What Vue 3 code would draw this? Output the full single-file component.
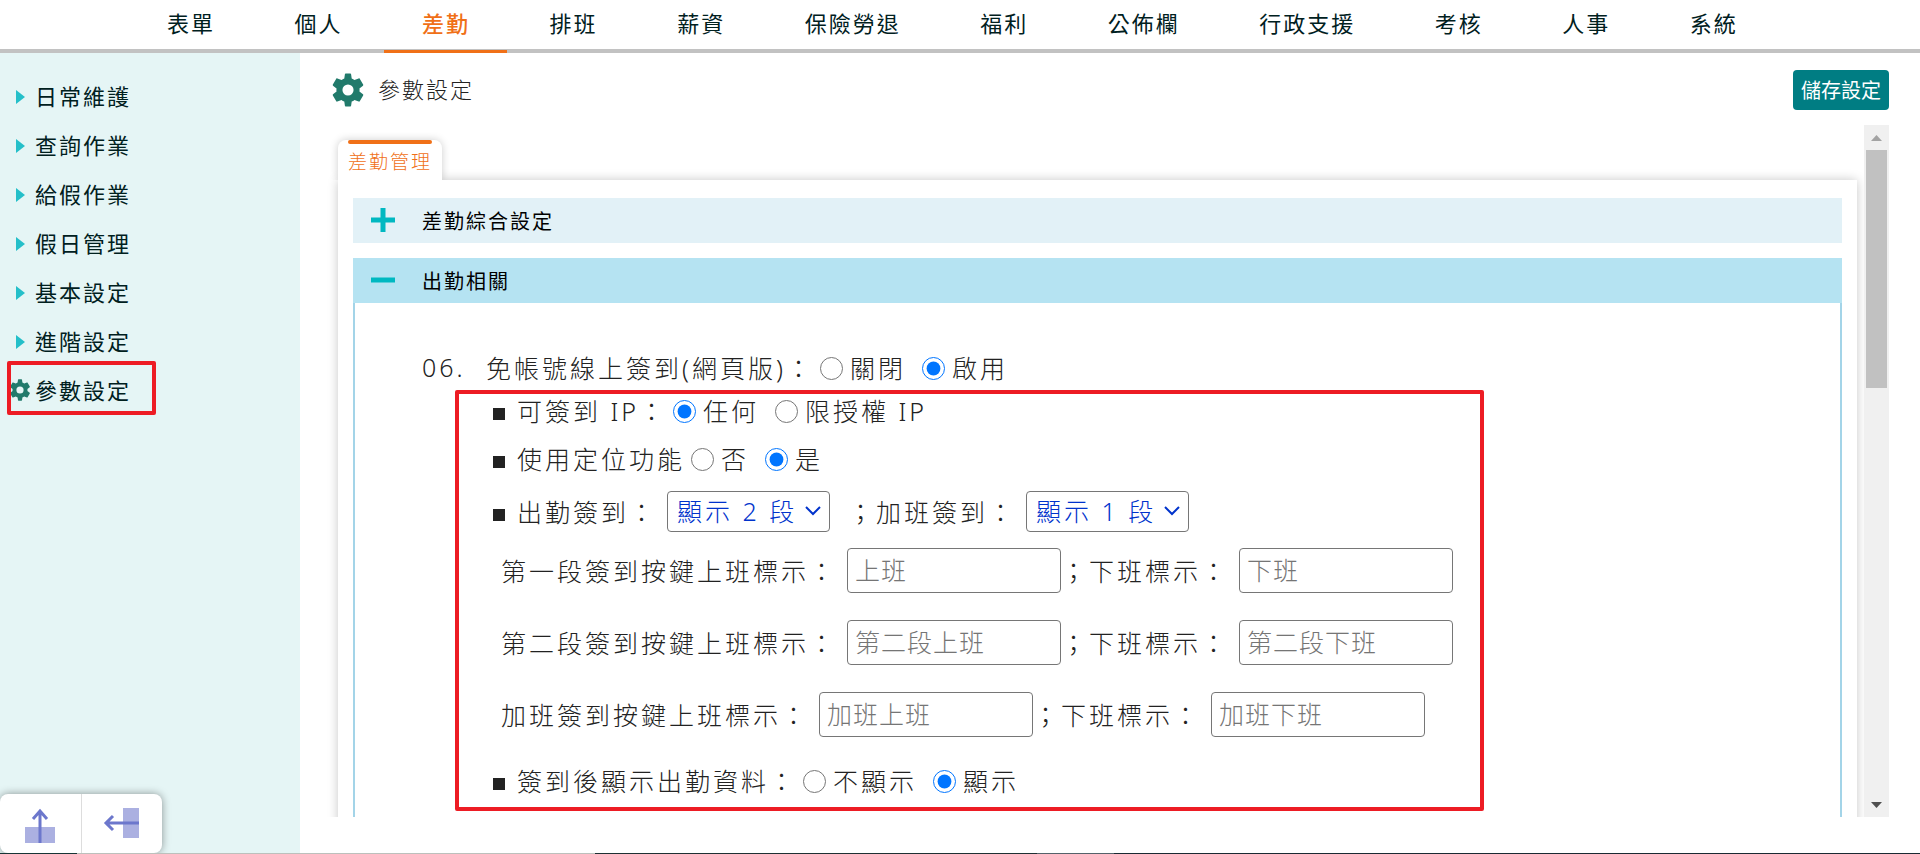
<script setup>
import { ref } from 'vue'

const menus = ['表單', '個人', '差勤', '排班', '薪資', '保險勞退', '福利', '公佈欄', '行政支援', '考核', '人事', '系統']
const sideItems = ['日常維護', '查詢作業', '給假作業', '假日管理', '基本設定', '進階設定']

const online = ref('on')
const ip = ref('any')
const locate = ref('yes')
const showData = ref('show')
const dutySegments = ref('2')
const overtimeSegments = ref('1')

const labels = [
  { id: 'first', text: '第一段簽到按鍵上班標示：', on: '上班', off: '下班' },
  { id: 'second', text: '第二段簽到按鍵上班標示：', on: '第二段上班', off: '第二段下班' },
  { id: 'overtime', text: '加班簽到按鍵上班標示：', on: '加班上班', off: '加班下班' },
]
const gear =
  'M19.4 13c0-.3.1-.6.1-1s0-.7-.1-1l2.3-1.800c.2-.2.3-.5.1-.7l-2.200-3.800c-.1-.2-.4-.3-.7-.2l-2.700 1.100c-.6-.4-1.100-.8-1.800-1L14 1.800c0-.3-.2-.5-.5-.5h-3c-.3 0-.5.2-.5.5l-.4 2.800c-.7.2-1.200.6-1.800 1L5.100 4.500c-.3-.1-.6 0-.7.2L2.200 8.500c-.2.2-.1.5.1.7L4.600 11c0 .3-.1.6-.1 1s0 .7.1 1l-2.300 1.800c-.2.2-.3.5-.1.7l2.200 3.800c.1.2.4.3.7.2l2.700-1.100c.6.4 1.100.8 1.800 1l.4 2.800c0 .3.200.5.5.5h3c.3 0 .5-.2.5-.5l.4-2.800c.7-.2 1.200-.6 1.800-1l2.700 1.100c.3.1.6 0 .7-.2l2.200-3.800c.2-.2.1-.5-.1-.7L19.400 13zM12 15.600a3.600 3.600 0 1 1 0-7.200 3.600 3.600 0 0 1 0 7.200z'
</script>

<template>
  <div class="page" lang="zh-Hant">
    <header class="topbar">
      <nav class="menu">
        <a v-for="m in menus" :key="m" href="#" :class="{ active: m === '差勤' }">{{ m }}</a>
      </nav>
    </header>

    <div class="body">
      <aside class="sidebar">
        <nav class="side-nav">
          <a v-for="s in sideItems" :key="s" href="#"><span class="caret"></span>{{ s }}</a>
          <a href="#" class="current">
            <svg class="side-gear" viewBox="1 1 22 22"><path :d="gear" fill="#217a6b" /></svg>參數設定
          </a>
        </nav>
        <div class="dock">
          <button type="button" aria-label="收合上方">
            <svg width="40" height="40" viewBox="0 0 40 40">
              <rect x="5" y="21" width="30" height="16" fill="#abb0e1" />
              <path d="M20 37V5M13 13l7-8 7 8" fill="none" stroke="#6c77cc" stroke-width="3" />
            </svg>
          </button>
          <button type="button" aria-label="收合左側">
            <svg width="40" height="40" viewBox="0 0 40 40">
              <rect x="21" y="2" width="16" height="30" fill="#abb0e1" />
              <path d="M37 17H4M11 10l-7 7 7 7" fill="none" stroke="#6c77cc" stroke-width="3" />
            </svg>
          </button>
        </div>
      </aside>

      <main class="main">
        <div class="title-row">
          <svg class="title-gear" viewBox="1 1 22 22"><path :d="gear" fill="#217a6b" /></svg>
          <h1>參數設定</h1>
          <button type="button" class="save">儲存設定</button>
        </div>

        <div class="scroller">
          <div class="content">
            <button type="button" class="tab">差勤管理</button>
            <div class="card">
              <button type="button" class="acc">
                <svg width="24" height="24" viewBox="0 0 24 24"><path d="M0 12h24M12 0v24" stroke="#00b8c1" stroke-width="5" /></svg>
                差勤綜合設定
              </button>
              <button type="button" class="acc open">
                <svg width="24" height="24" viewBox="0 0 24 24"><path d="M0 12h24" stroke="#00b8c1" stroke-width="5" /></svg>
                出勤相關
              </button>
              <section class="panel">
                <div class="row head">
                  <span class="num">06.</span>
                  <span>免帳號線上簽到(網頁版)：</span>
                  <label><input v-model="online" type="radio" name="online" value="off" />關閉</label>
                  <label><input v-model="online" type="radio" name="online" value="on" />啟用</label>
                </div>
                <div class="sub">
                  <div class="row ip">
                    <i class="dot"></i><span>可簽到 IP：</span>
                    <label><input v-model="ip" type="radio" name="ip" value="any" />任何</label>
                    <label><input v-model="ip" type="radio" name="ip" value="auth" />限授權 IP</label>
                  </div>
                  <div class="row locate">
                    <i class="dot"></i><span>使用定位功能</span>
                    <label><input v-model="locate" type="radio" name="locate" value="no" />否</label>
                    <label><input v-model="locate" type="radio" name="locate" value="yes" />是</label>
                  </div>
                  <div class="row seg">
                    <i class="dot"></i><label for="duty">出勤簽到：</label>
                    <span class="select">
                      <select id="duty" v-model="dutySegments">
                        <option value="1">顯示 1 段</option>
                        <option value="2">顯示 2 段</option>
                      </select>
                      <svg width="16" height="10" viewBox="0 0 16 10"><path d="M1 1l7 7 7-7" fill="none" stroke="#0033cc" stroke-width="2" /></svg>
                    </span>
                    <label for="ot" class="after">；加班簽到：</label>
                    <span class="select">
                      <select id="ot" v-model="overtimeSegments">
                        <option value="1">顯示 1 段</option>
                        <option value="2">顯示 2 段</option>
                      </select>
                      <svg width="16" height="10" viewBox="0 0 16 10"><path d="M1 1l7 7 7-7" fill="none" stroke="#0033cc" stroke-width="2" /></svg>
                    </span>
                  </div>
                  <div v-for="l in labels" :key="l.id" class="row field">
                    <label :for="l.id + '-on'">{{ l.text }}</label>
                    <input :id="l.id + '-on'" type="text" :placeholder="l.on" />
                    <label :for="l.id + '-off'">；下班標示：</label>
                    <input :id="l.id + '-off'" type="text" :placeholder="l.off" />
                  </div>
                  <div class="row last">
                    <i class="dot"></i><span>簽到後顯示出勤資料：</span>
                    <label><input v-model="showData" type="radio" name="show" value="hide" />不顯示</label>
                    <label><input v-model="showData" type="radio" name="show" value="show" />顯示</label>
                  </div>
                </div>
              </section>
            </div>
          </div>
          <div class="scrollbar">
            <svg width="11" height="6" viewBox="0 0 11 6"><path d="M0 6L5.500 0 11 6z" fill="#a3a3a3" /></svg>
            <div class="thumb"></div>
            <svg width="11" height="6" viewBox="0 0 11 6"><path d="M0 0h11L5.500 6z" fill="#505050" /></svg>
          </div>
        </div>
      </main>
    </div>
    <div class="strip"></div>
  </div>
</template>

<style>
body {
  overflow: hidden;
}
</style>

<style scoped>
* {
  box-sizing: border-box;
}
.page {
  height: 100vh;
  display: flex;
  flex-direction: column;
  background: #fff;
  color: #222;
  font-family: "Open Sans", "Noto Sans CJK TC", sans-serif;
}
button {
  border: 0;
  background: none;
  font-family: inherit;
  cursor: pointer;
}
a {
  text-decoration: none;
  color: #00201e;
}
.topbar {
  flex: none;
  height: 53px;
  border-bottom: 4px solid #c2c2c2;
}
.menu {
  display: flex;
  justify-content: space-between;
  padding: 0 145px 0 129px;
}
.menu a {
  height: 53px;
  padding: 0 37px 0 38px;
  font-size: 22px;
  line-height: 46px;
  letter-spacing: 2px;
  white-space: nowrap;
}
.menu a.active {
  color: #f07017;
  font-weight: 500;
  border-bottom: 3px solid #f07017;
}
.body {
  flex: 1;
  min-height: 0;
  display: flex;
}
.sidebar {
  flex: none;
  width: 300px;
  display: flex;
  flex-direction: column;
  justify-content: space-between;
  overflow: hidden;
  background: #e5f5f5;
}
.side-nav {
  padding: 19px 0 0 7px;
}
.side-nav a {
  position: relative;
  display: flex;
  align-items: center;
  height: 49px;
  padding: 0 0 4px 28px;
  font-size: 22px;
  letter-spacing: 2px;
}
.caret {
  position: absolute;
  top: 18px;
  left: 9px;
  border: 7px solid transparent;
  border-left: 9px solid #24bfc9;
  border-right: 0;
}
.side-nav a.current {
  width: 149px;
}
.side-nav a.current::after {
  content: "";
  position: absolute;
  inset: -5px 0 0;
  border: 4px solid #ed1c24;
  border-radius: 2px;
}
.side-gear {
  position: absolute;
  top: 13px;
  left: 2px;
  width: 22px;
  height: 22px;
}
.dock {
  width: 162px;
  height: 59px;
  display: flex;
  border-radius: 8px;
  background: #fff;
  box-shadow: 0 0 8px rgba(0, 0, 0, 0.4);
}
.dock button {
  flex: 1;
  padding: 8px 0 0;
}
.dock button + button {
  border-left: 1px solid #ddd;
}
.main {
  flex: 1;
  min-width: 0;
  display: flex;
  flex-direction: column;
  padding: 17px 31px 36px 0;
}
.title-row {
  flex: none;
  display: flex;
  align-items: center;
  height: 40px;
  padding-left: 31px;
}
.title-gear {
  width: 34px;
  height: 34px;
}
h1 {
  flex: 1;
  margin: 0;
  padding: 0 0 4px 13px;
  font-size: 22px;
  font-weight: 300;
  letter-spacing: 2px;
}
.save {
  height: 40px;
  padding: 0 8px 2px;
  border-radius: 4px;
  background: #007d83;
  color: #fff;
  font-size: 20px;
}
.scroller {
  flex: 1;
  min-height: 0;
  display: flex;
  margin-top: 15px;
}
.content {
  flex: 1;
  min-width: 0;
  overflow: hidden;
  padding: 15px 7px 0 38px;
}
.tab {
  position: relative;
  z-index: 1;
  display: block;
  height: 40px;
  padding: 0 10px;
  border-radius: 8px 8px 0 0;
  background: #fff;
  box-shadow: 0 0 8px rgba(0, 0, 0, 0.2);
  clip-path: inset(-10px -10px 0 -10px);
  color: #f07017;
  font-size: 19px;
  font-weight: 300;
  line-height: 44px;
  letter-spacing: 2px;
}
.tab::before {
  content: "";
  position: absolute;
  top: 0;
  left: 10px;
  right: 10px;
  height: 4px;
  border-radius: 2px;
  background: #f07017;
}
.card {
  padding: 18px 15px;
  background: #fff;
  box-shadow: 0 0 10px rgba(0, 0, 0, 0.22);
}
.acc {
  display: flex;
  align-items: center;
  gap: 27px;
  width: 100%;
  height: 45px;
  margin-bottom: 15px;
  padding: 0 18px 1px;
  background: #e2f1f7;
  color: #000;
  font-size: 20px;
  letter-spacing: 2px;
}
.acc.open {
  margin-bottom: 0;
  background: #b5e3f2;
}
.panel {
  height: 700px;
  padding-top: 40px;
  border: 2px solid #a3d4e8;
  border-top: 0;
  font-family: "Noto Sans", "Noto Sans CJK TC", sans-serif;
  font-size: 25px;
  font-weight: 300;
  letter-spacing: 3px;
}
.row {
  display: flex;
  align-items: center;
  padding-bottom: 2px;
  white-space: nowrap;
}
.head {
  height: 50px;
  padding-left: 67px;
}
.num {
  width: 64px;
}
.sub {
  position: relative;
  width: fit-content;
  margin-left: 100px;
  padding-right: 31px;
}
.sub::after {
  content: "";
  position: absolute;
  inset: -3px 0 0;
  border: 4px solid #ed1c24;
  border-radius: 2px;
  pointer-events: none;
}
.sub .row {
  padding-left: 38px;
}
.sub .ip {
  height: 36px;
}
.sub .locate {
  height: 60px;
}
.sub .seg {
  height: 46px;
}
.sub .field {
  height: 72px;
  padding-left: 46px;
}
.sub .last {
  height: 60px;
}
.dot {
  width: 12px;
  height: 12px;
  margin: 8px 12px 0 0;
  background: #222;
}
.row label {
  display: flex;
  align-items: center;
  margin-right: 10px;
}
.row label.after {
  margin-left: 18px;
}
input[type="radio"] {
  width: 23px;
  height: 23px;
  margin: 2px 7px 0 6px;
  accent-color: #0075ff;
}
.select {
  position: relative;
  display: flex;
  align-items: center;
}
.select svg {
  position: absolute;
  right: 9px;
  pointer-events: none;
}
select {
  appearance: none;
  width: 163px;
  height: 41px;
  padding: 0 9px;
  border: 1px solid #767676;
  border-radius: 4px;
  background: #fff;
  color: #0033cc;
  font: inherit;
  letter-spacing: 3px;
}
input[type="text"] {
  width: 214px;
  height: 45px;
  padding: 0 7px;
  border: 1px solid #767676;
  border-radius: 4px;
  background: #fff;
  font: inherit;
  letter-spacing: 1px;
}
input::placeholder {
  color: #757575;
  opacity: 1;
}
.scrollbar {
  flex: none;
  width: 25px;
  display: flex;
  flex-direction: column;
  align-items: center;
  padding: 10px 2px 9px;
  background: #f0f0f0;
}
.thumb {
  width: 100%;
  height: 238px;
  margin: 9px 0 auto;
  background: #c1c1c1;
}
.strip {
  flex: none;
  height: 1px;
  background: linear-gradient(90deg, #173536 4%, #bcc0bc 4% 31%, #1e3033 31% 54%, #55626a 54% 58%, #1a2a33 58%);
}
</style>
